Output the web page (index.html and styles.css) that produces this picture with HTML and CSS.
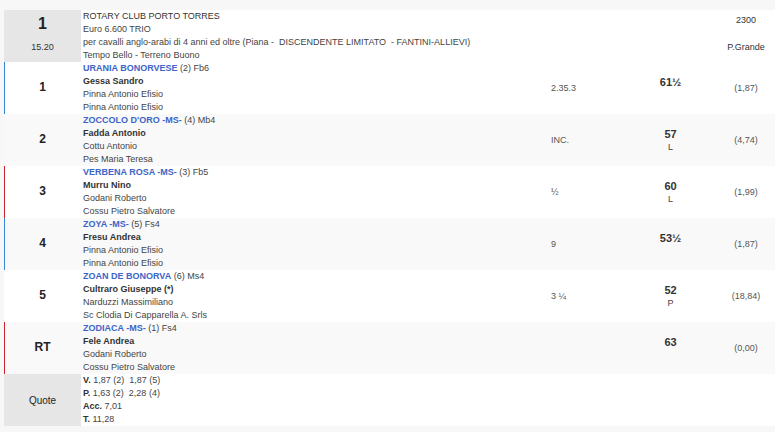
FILE: index.html
```html
<!DOCTYPE html>
<html lang="it">
<head>
<meta charset="utf-8">
<title>Risultati corsa</title>
<link rel="stylesheet" href="styles.css">
</head>
<body>
<table class="race">
  <colgroup>
    <col class="c-num"><col class="c-info"><col class="c-time"><col class="c-weight"><col class="c-odds">
  </colgroup>
  <tr class="head">
    <td class="num head-num">
      <div class="big">1</div>
      <div class="hour">15.20</div>
    </td>
    <td class="info" colspan="3">
      <div class="title">ROTARY CLUB PORTO TORRES</div>
      <div>Euro 6.600 TRIO</div>
      <div>per cavalli anglo-arabi di 4 anni ed oltre (Piana -&nbsp; DISCENDENTE LIMITATO&nbsp; - FANTINI-ALLIEVI)</div>
      <div>Tempo Bello - Terreno Buono</div>
    </td>
    <td class="odds head-right">
      <div>2300</div>
      <div class="track">P.Grande</div>
    </td>
  </tr>
  <tr class="row mark-blue">
    <td class="num"><span class="pos">1</span></td>
    <td class="info">
      <div><span class="horse">URANIA BONORVESE</span> (2) Fb6</div>
      <div class="jockey">Gessa Sandro</div>
      <div>Pinna Antonio Efisio</div>
      <div>Pinna Antonio Efisio</div>
    </td>
    <td class="time">2.35.3</td>
    <td class="weight"><div class="kg">61½</div><div class="note">&nbsp;</div></td>
    <td class="odds">(1,87)</td>
  </tr>
  <tr class="row alt">
    <td class="num"><span class="pos">2</span></td>
    <td class="info">
      <div><span class="horse">ZOCCOLO D'ORO -MS-</span> (4) Mb4</div>
      <div class="jockey">Fadda Antonio</div>
      <div>Cottu Antonio</div>
      <div>Pes Maria Teresa</div>
    </td>
    <td class="time">INC.</td>
    <td class="weight"><div class="kg">57</div><div class="note">L</div></td>
    <td class="odds">(4,74)</td>
  </tr>
  <tr class="row mark-red">
    <td class="num"><span class="pos">3</span></td>
    <td class="info">
      <div><span class="horse">VERBENA ROSA -MS-</span> (3) Fb5</div>
      <div class="jockey">Murru Nino</div>
      <div>Godani Roberto</div>
      <div>Cossu Pietro Salvatore</div>
    </td>
    <td class="time">½</td>
    <td class="weight"><div class="kg">60</div><div class="note">L</div></td>
    <td class="odds">(1,99)</td>
  </tr>
  <tr class="row alt mark-blue">
    <td class="num"><span class="pos">4</span></td>
    <td class="info">
      <div><span class="horse">ZOYA -MS-</span> (5) Fs4</div>
      <div class="jockey">Fresu Andrea</div>
      <div>Pinna Antonio Efisio</div>
      <div>Pinna Antonio Efisio</div>
    </td>
    <td class="time">9</td>
    <td class="weight"><div class="kg">53½</div><div class="note">&nbsp;</div></td>
    <td class="odds">(1,87)</td>
  </tr>
  <tr class="row">
    <td class="num"><span class="pos">5</span></td>
    <td class="info">
      <div><span class="horse">ZOAN DE BONORVA</span> (6) Ms4</div>
      <div class="jockey">Cultraro Giuseppe (*)</div>
      <div>Narduzzi Massimiliano</div>
      <div>Sc Clodia Di Capparella A. Srls</div>
    </td>
    <td class="time">3 ¼</td>
    <td class="weight"><div class="kg">52</div><div class="note">P</div></td>
    <td class="odds">(18,84)</td>
  </tr>
  <tr class="row alt mark-red">
    <td class="num"><span class="pos">RT</span></td>
    <td class="info">
      <div><span class="horse">ZODIACA -MS-</span> (1) Fs4</div>
      <div class="jockey">Fele Andrea</div>
      <div>Godani Roberto</div>
      <div>Cossu Pietro Salvatore</div>
    </td>
    <td class="time"></td>
    <td class="weight"><div class="kg">63</div><div class="note">&nbsp;</div></td>
    <td class="odds">(0,00)</td>
  </tr>
  <tr class="quote">
    <td class="num quote-label">Quote</td>
    <td class="info" colspan="4">
      <div><b>V.</b> 1,87 (2)&nbsp; 1,87 (5)</div>
      <div><b>P.</b> 1,63 (2)&nbsp; 2,28 (4)</div>
      <div><b>Acc.</b> 7,01</div>
      <div><b>T.</b> 11,28</div>
    </td>
  </tr>
</table>
</body>
</html>
```

FILE: styles.css
```css
html, body {
  margin: 0;
  padding: 0;
}
body {
  background: #f7f7f7;
  padding: 10px 0 0 4px;
  font-family: "Liberation Sans", Arial, sans-serif;
  font-size: 9px;
  line-height: 13px;
  color: #444;
  overflow: hidden;
}
.race {
  border-collapse: collapse;
  border-spacing: 0;
  width: 771px;
  table-layout: fixed;
  background: #fff;
}
.c-num { width: 77px; }
.c-info { width: 464px; }
.c-time { width: 79px; }
.c-weight { width: 93px; }
.c-odds { width: 58px; }

.race td {
  padding: 0;
  vertical-align: middle;
}
.row td, .quote td { height: 52px; }
.alt td { background: #f9f9f9; }

.mark-blue .num { box-shadow: inset 1px 0 0 #3b86d9; }
.mark-red .num { box-shadow: inset 1px 0 0 #c8262c; }

.num {
  text-align: center;
  color: #222;
}
.pos {
  font-size: 12px;
  font-weight: bold;
}
.head-num, .quote-label {
  background: #e6e6e6 !important;
}
.head-num {
  vertical-align: top !important;
  padding-top: 4px !important;
}
.big {
  font-size: 16px;
  font-weight: bold;
  line-height: 20px;
}
.hour {
  margin-top: 7px;
  color: #333;
}
.quote-label {
  font-size: 10px;
  color: #222;
}
.info {
  padding-left: 2px !important;
  vertical-align: top !important;
  white-space: nowrap;
}
.title { color: #333; }
.horse {
  color: #3d64c8;
  font-weight: bold;
}
.jockey {
  color: #333;
  font-weight: bold;
}
.info b { color: #333; }
.time {
  padding-left: 6px !important;
  color: #555;
}
.weight {
  text-align: center;
}
.kg {
  font-size: 11px;
  font-weight: bold;
  line-height: 14px;
  color: #333;
}
.note {
  line-height: 13px;
  color: #444;
}
.odds {
  text-align: center;
  color: #555;
}
.head-right {
  vertical-align: top !important;
  padding-top: 4px !important;
  color: #333;
}
.track {
  margin-top: 14px;
}
```
